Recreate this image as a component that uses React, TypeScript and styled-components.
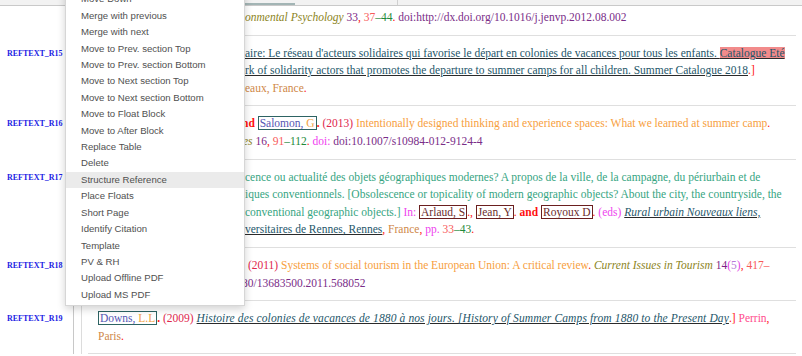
import React from 'react';
import styled, { createGlobalStyle } from 'styled-components';

const GlobalStyle = createGlobalStyle`
  html, body {
    margin: 0;
    padding: 0;
    background: #fff;
    overflow: hidden;
  }
  body {
    font-family: "Liberation Serif", "Times New Roman", serif;
  }
`;

const MENU_ITEMS = [
  'Move Up',
  'Move Down',
  'Merge with previous',
  'Merge with next',
  'Move to Prev. section Top',
  'Move to Prev. section Bottom',
  'Move to Next section Top',
  'Move to Next section Bottom',
  'Move to Float Block',
  'Move to After Block',
  'Replace Table',
  'Delete',
  'Structure Reference',
  'Place Floats',
  'Short Page',
  'Identify Citation',
  'Template',
  'PV & RH',
  'Upload Offline PDF',
  'Upload MS PDF',
];

const App = () => {
  return (
    <Page>
      <GlobalStyle />
      <TopStrip>
        <StripThumb />
        <StripTick />
      </TopStrip>

      <Row>
        <Label $top={3} />
        <Cell>
          <Entry $top={3}>
            <Line>
              <Covered $w={147}>Cushing, D.F. (2012) Journal of Envir</Covered>
              <Journal>onmental Psychology</Journal> <Volume>33</Volume>
              <Punct>,</Punct> <FirstPage>37</FirstPage>
              <LastPage>–44</LastPage>
              <Punct>.</Punct> <DoiText>doi:http://dx.doi.org/10.1016/j.jenvp.2012.08.002</DoiText>
            </Line>
          </Entry>
        </Cell>
      </Row>

      <Row>
        <Label $top={9}>REFTEXT_R15</Label>
        <Cell>
          <Entry $top={9}>
            <Line>
              <Covered $w={147}>JPA (2018) Catalogue Eté Solid</Covered>
              <Linked>
                aire: Le réseau d'acteurs solidaires qui favorise le départ en colonies de vacances pour tous
                les enfants. <Highlight>Catalogue Eté </Highlight>
              </Linked>
            </Line>
            <Line>
              <Covered $w={147}>2018. [Summer Catalogue: The netwo</Covered>
              <Linked>
                rk of solidarity actors that promotes the departure to summer camps for all children. Summer
                Catalogue 2018
              </Linked>
              <Punct>.]</Punct>
            </Line>
            <Line>
              <Covered $w={147}>Jeunesse au Plein Air, Bord</Covered>
              <Place>eaux, France</Place>
              <Punct>.</Punct>
            </Line>
          </Entry>
        </Cell>
      </Row>

      <Row>
        <Label $top={9}>REFTEXT_R16</Label>
        <Cell>
          <Entry $top={9}>
            <Line>
              <Covered $w={144}>Cushing, D.F. a</Covered>
              <Conj>nd</Conj>{' '}
              <AuthorBox $tone="teal">
                <Surname>Salomon,</Surname> <Initials>G</Initials>
              </AuthorBox>
              <Conj>.</Conj> <Year>(2013)</Year>{' '}
              <ArticleTitle>Intentionally designed thinking and experience spaces: What we learned at summer camp</ArticleTitle>
              <Punct>.</Punct>
            </Line>
            <Line>
              <Covered $w={145}>Learning Environment Research Lessons Spac</Covered>
              <Journal>es</Journal> <Volume>16</Volume>
              <Punct>,</Punct> <FirstPage>91</FirstPage>
              <LastPage>–112</LastPage>
              <Punct>.</Punct> <DoiTag>doi:</DoiTag> <DoiText>doi:10.1007/s10984-012-9124-4</DoiText>
            </Line>
          </Entry>
        </Cell>
      </Row>

      <Row>
        <Label $top={9}>REFTEXT_R17</Label>
        <Cell>
          <Entry $top={9}>
            <Line>
              <Covered $w={147}>Bourdeau-Lepage, L. (2013) Obsoles</Covered>
              <ChapterTitle>
                cence ou actualité des objets géographiques modernes? A propos de la ville, de la campagne, du
                périurbain et de
              </ChapterTitle>
            </Line>
            <Line>
              <Covered $w={147}>l'urbain et des catégories géograph</Covered>
              <ChapterTitle>
                iques conventionnels. [Obsolescence or topicality of modern geographic objects? About the city,
                the countryside, the
              </ChapterTitle>
            </Line>
            <Line>
              <Covered $w={147}>suburban, the urban and the</Covered>
              <ChapterTitle>conventional geographic objects.]</ChapterTitle> <EdsTag>In:</EdsTag>{' '}
              <AuthorBox $tone="maroon">Arlaud, S</AuthorBox>
              <Punct>., </Punct>
              <AuthorBox $tone="maroon">Jean, Y</AuthorBox>
              <Punct>.</Punct> <Conj>and</Conj>{' '}
              <AuthorBox $tone="maroon">Royoux D</AuthorBox>
              <Punct>.</Punct> <EdsTag>(eds)</EdsTag>{' '}
              <Linked $italic>Rural urbain Nouveaux liens,</Linked>
            </Line>
            <Line>
              <Covered $w={147}>nouvelles frontières. Presses Uni</Covered>
              <Linked>versitaires de Rennes, Rennes</Linked>
              <Punct>,</Punct> <Place>France</Place>
              <Punct>,</Punct> <EdsTag>pp.</EdsTag> <FirstPage>33</FirstPage>
              <LastPage>–43</LastPage>
              <Punct>.</Punct>
            </Line>
          </Entry>
        </Cell>
      </Row>

      <Row>
        <Label $top={9}>REFTEXT_R18</Label>
        <Cell>
          <Entry $top={9}>
            <Line>
              <Covered $w={147}>Minnaert, L., Maitland, R. and Miller, G.</Covered> <Year>(2011)</Year>{' '}
              <ArticleTitle>Systems of social tourism in the European Union: A critical review</ArticleTitle>
              <Punct>.</Punct> <Journal>Current Issues in Tourism</Journal> <Volume>14</Volume>
              <Paren>(</Paren>
              <Issue>5</Issue>
              <Paren>)</Paren>
              <Punct>,</Punct> <FirstPage>417–</FirstPage>
            </Line>
            <Line>
              <Covered $w={144}>432. doi: doi:10.10</Covered>
              <DoiText>80/13683500.2011.568052</DoiText>
            </Line>
          </Entry>
        </Cell>
      </Row>

      <Row>
        <Label $top={9}>REFTEXT_R19</Label>
        <Cell>
          <Entry $top={9}>
            <Line>
              <AuthorBox $tone="teal">
                <Surname>Downs,</Surname> <Initials>L.L</Initials>
              </AuthorBox>
              <Conj>.</Conj> <Year>(2009)</Year>{' '}
              <Linked $italic $wide>
                Histoire des colonies de vacances de 1880 à nos jours. [History of Summer Camps from 1880 to the
                Present Day
              </Linked>
              <Punct>.]</Punct> <Publisher>Perrin</Publisher>
              <Punct>,</Punct>
            </Line>
            <Line>
              <Place>Paris</Place>
              <Punct>.</Punct>
            </Line>
          </Entry>
        </Cell>
      </Row>

      <Menu>
        {MENU_ITEMS.map((item) => (
          <MenuItem key={item} $active={item === 'Structure Reference'}>
            {item}
          </MenuItem>
        ))}
      </Menu>
    </Page>
  );
};

export default App;

const Page = styled.div`
  position: relative;
  width: 802px;
  height: 356px;
  overflow: hidden;
  background: #fff;
`;

const TopStrip = styled.div`
  display: flex;
  align-items: flex-end;
  height: 5px;
  background: #f2f2f2;
  border-bottom: 1px solid #c9c9c9;
`;

const StripThumb = styled.div`
  margin-left: 190px;
  width: 105px;
  height: 2px;
  background: #a3b5b5;
`;

const StripTick = styled.div`
  margin-left: 102px;
  width: 1px;
  height: 5px;
  background: #d0d0d0;
`;

const Row = styled.div`
  display: grid;
  grid-template-columns: 74px 1fr;
`;

const Label = styled.div<{ $top: number }>`
  border-right: 1px solid #c8c8c8;
  padding: ${(p) => p.$top}px 0 0 7px;
  font-family: "Liberation Serif", serif;
  font-weight: bold;
  font-size: 8px;
  line-height: 17.6px;
  color: #1c1ce4;
`;

const Cell = styled.div`
  margin-left: 7px;
  border-left: 1px solid #dcdcdc;
  padding: 0 6px;
`;

const Entry = styled.div<{ $top: number }>`
  padding: ${(p) => p.$top}px 10px 8px;
  border-bottom: 1px solid #dfdfdf;
  font-size: 11.5px;
  line-height: 17.6px;
  color: #333;
`;

const Line = styled.div`
  white-space: nowrap;
`;

const Covered = styled.span<{ $w: number }>`
  display: inline-block;
  width: ${(p) => p.$w}px;
  height: 17.6px;
  overflow: hidden;
  vertical-align: top;
  color: #888;
`;

const Punct = styled.span`
  color: #ff1010;
`;

const Conj = styled.span`
  color: #ff1010;
  font-weight: bold;
`;

const Journal = styled.span`
  color: #8c841c;
  font-style: italic;
`;

const Volume = styled.span`
  color: #7d1f86;
`;

const Paren = styled.span`
  color: #e23ee2;
`;

const Issue = styled.span`
  color: #b77ad8;
`;

const FirstPage = styled.span`
  color: #f75a5a;
`;

const LastPage = styled.span`
  color: #1e8a3a;
`;

const DoiTag = styled.span`
  color: #f03cf0;
`;

const DoiText = styled.span`
  color: #7a2d88;
`;

const Year = styled.span`
  color: #e0264c;
`;

const ArticleTitle = styled.span`
  color: #f7a040;
`;

const ChapterTitle = styled.span`
  color: #36a582;
`;

const Place = styled.span`
  color: #cf8748;
`;

const Publisher = styled.span`
  color: #ff4d8d;
`;

const EdsTag = styled.span`
  color: #ee44ee;
`;

const Linked = styled.span<{ $italic?: boolean; $wide?: boolean }>`
  color: #24566a;
  font-style: ${(p) => (p.$italic ? 'italic' : 'normal')};
  letter-spacing: ${(p) => (p.$wide ? '0.12px' : 'normal')};
  text-decoration: underline;
  text-decoration-color: #2a2a2a;
`;

const Highlight = styled.span`
  background: #f28b8b;
`;

const AuthorBox = styled.span<{ $tone: 'teal' | 'maroon' }>`
  border: 1px solid ${(p) => (p.$tone === 'teal' ? '#2d6363' : '#6b1f1f')};
  padding: 0 1px;
  color: ${(p) => (p.$tone === 'teal' ? '#5656b4' : '#6b2b2b')};
`;

const Surname = styled.span`
  color: #5656b4;
`;

const Initials = styled.span`
  color: #f2a344;
`;

const Menu = styled.ul`
  position: absolute;
  top: -30px;
  left: 65px;
  width: 178px;
  margin: 0;
  padding: 4px 0 2px;
  list-style: none;
  background: #fff;
  border: 1px solid #d6d6d6;
  box-shadow: 0 3px 8px rgba(0, 0, 0, 0.18);
  font-family: "Liberation Sans", Arial, sans-serif;
  font-size: 9.6px;
  line-height: 16.4px;
  color: #505050;
`;

const MenuItem = styled.li<{ $active?: boolean }>`
  padding-left: 15px;
  white-space: nowrap;
  background: ${(p) => (p.$active ? '#ebebeb' : 'transparent')};
`;
